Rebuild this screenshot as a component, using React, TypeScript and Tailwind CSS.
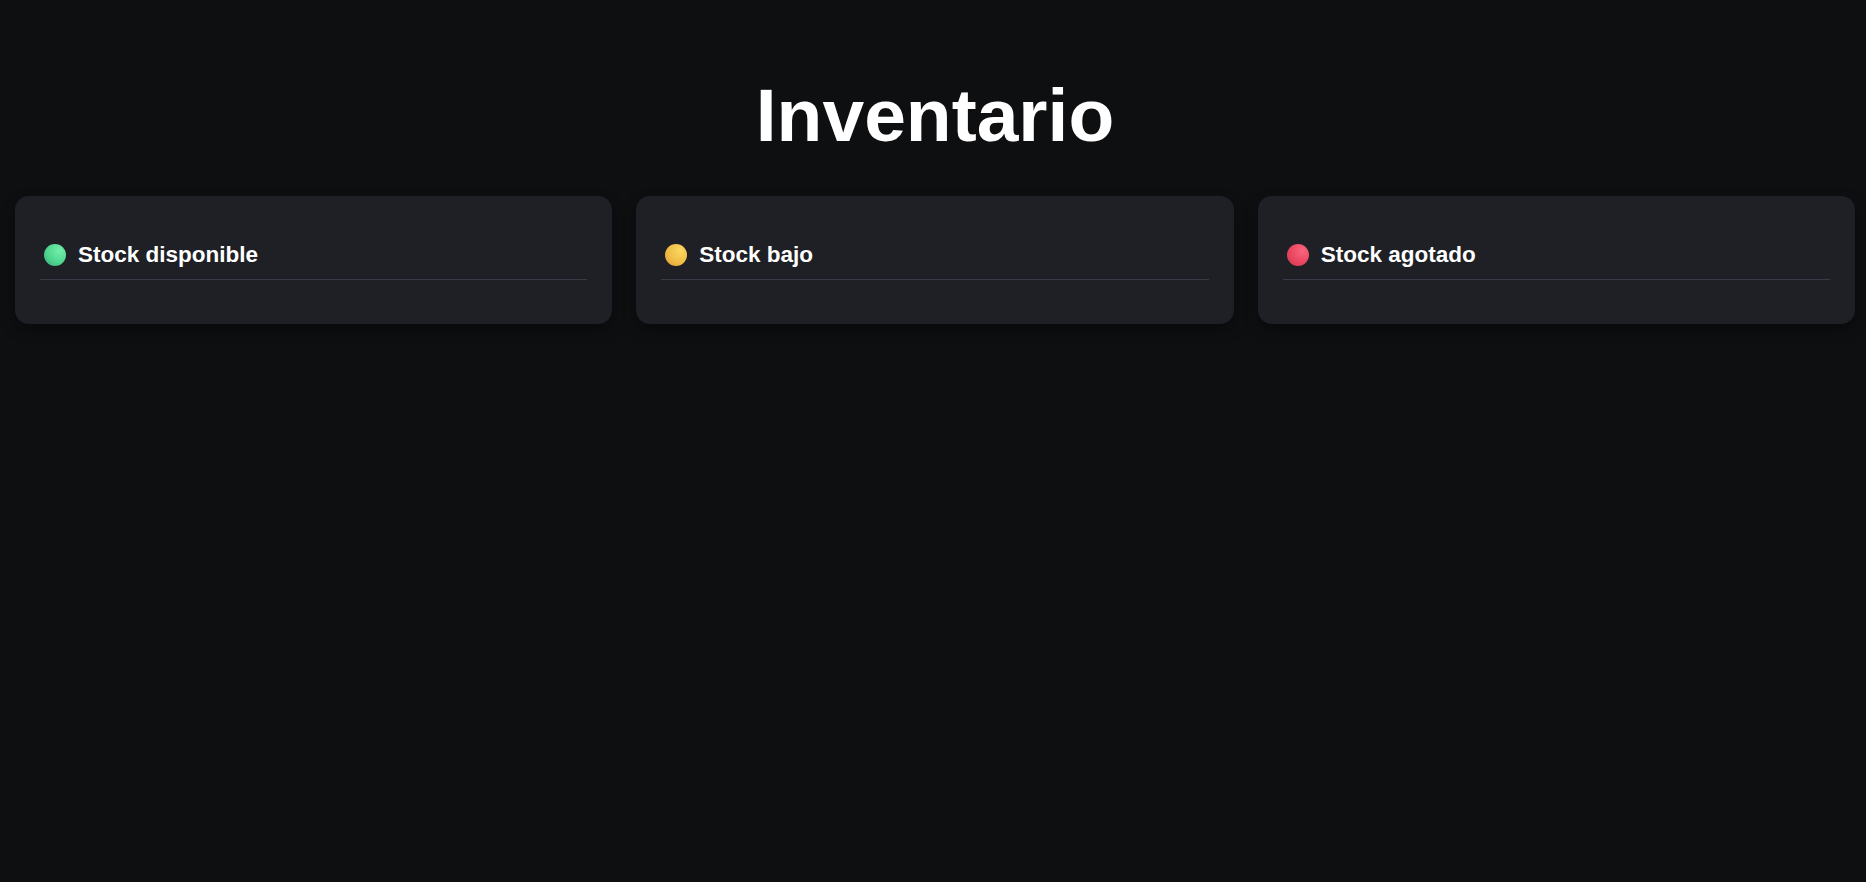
const sections = [
  {
    id: 'available',
    label: 'Stock disponible',
    dot: 'bg-[radial-gradient(circle_at_70%_30%,#74eeaa_0%,#4fd690_55%,#3aa877_100%)]',
  },
  {
    id: 'low',
    label: 'Stock bajo',
    dot: 'bg-[radial-gradient(circle_at_70%_30%,#fbd961_0%,#f0bd45_55%,#d99a3c_100%)]',
  },
  {
    id: 'out',
    label: 'Stock agotado',
    dot: 'bg-[radial-gradient(circle_at_70%_30%,#f8667c_0%,#ea4660_55%,#c93750_100%)]',
  },
];

function StockColumn({ label, dot }: { label: string; dot: string }) {
  return (
    <section className="rounded-[14px] bg-[#1e2025] px-[25px] pt-[46px] pb-[44px] shadow-[0_6px_14px_rgba(0,0,0,0.35)]">
      <h2 className="flex items-center gap-3 border-b border-[#363c48] pb-[11px] pl-1 text-[22.5px] leading-[26px] font-bold text-white">
        <span className={`h-[22px] w-[22px] shrink-0 rounded-full ${dot}`} />
        {label}
      </h2>
    </section>
  );
}

export default function App() {
  return (
    <div
      className="min-h-screen bg-[#0e0f11] pl-[15px] pr-[11px]"
      style={{ fontFamily: '"Liberation Sans", Arial, sans-serif' }}
    >
      <h1 className="pt-[73px] pb-[38px] text-center text-[75px] leading-[85px] font-bold text-white">
        Inventario
      </h1>
      <div className="grid grid-cols-3 gap-[24px]">
        {sections.map((s) => (
          <StockColumn key={s.id} label={s.label} dot={s.dot} />
        ))}
      </div>
    </div>
  );
}
